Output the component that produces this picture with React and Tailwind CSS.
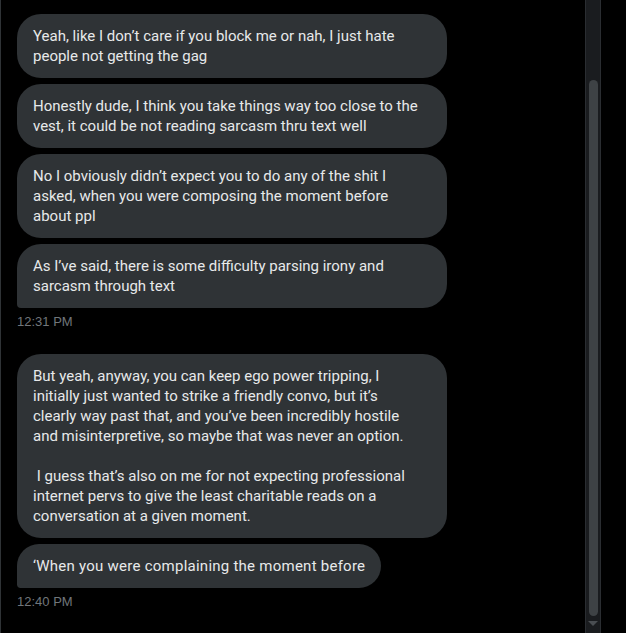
import React from 'react';

// lines are broken where the reference wraps them
const groups = [
  {
    time: '12:31 PM',
    messages: [
      ['Yeah, like I don’t care if you block me or nah, I just hate', 'people not getting the gag'],
      ['Honestly dude, I think you take things way too close to the', 'vest, it could be not reading sarcasm thru text well'],
      ['No I obviously didn’t expect you to do any of the shit I', 'asked, when you were composing the moment before', 'about ppl'],
      ['As I’ve said, there is some difficulty parsing irony and', 'sarcasm through text'],
    ],
  },
  {
    time: '12:40 PM',
    messages: [
      [
        'But yeah, anyway, you can keep ego power tripping, I',
        'initially just wanted to strike a friendly convo, but it’s',
        'clearly way past that, and you’ve been incredibly hostile',
        'and misinterpretive, so maybe that was never an option.',
        '',
        ' I guess that’s also on me for not expecting professional',
        'internet pervs to give the least charitable reads on a',
        'conversation at a given moment.',
      ],
      ['‘When you were complaining the moment before'],
    ],
  },
];

function Bubble({ lines, last }) {
  const multi = lines.length > 1;
  return (
    <div
      className={`${multi ? 'w-[430px]' : 'w-fit tracking-[0.25px]'} bg-[#2f3336] text-[#e7e9ea] px-4 py-[12px] text-[15px] leading-[20px] whitespace-pre rounded-[24px] ${last ? 'rounded-bl-[4px]' : ''}`}
    >
      {lines.join('\n')}
    </div>
  );
}

export default function App() {
  return (
    <div className="h-[633px] w-[626px] bg-black flex overflow-hidden" style={{ fontFamily: '"Segoe UI", Roboto, sans-serif' }}>
      <div className="flex-1 border-l border-[#2f3336] pl-4 pt-[14px] flex flex-col">
        {groups.map((g, gi) => (
          <div key={gi} className={`flex flex-col ${gi > 0 ? 'mt-[24px]' : ''}`}>
            <div className="flex flex-col gap-[6px]">
              {g.messages.map((m, i) => (
                <Bubble key={i} lines={m} last={i === g.messages.length - 1} />
              ))}
            </div>
            <div className="mt-[6px] text-[13px] leading-[16px] text-[#71767b]" style={{ fontFamily: '"Liberation Sans", Arial, sans-serif' }}>
              {g.time}
            </div>
          </div>
        ))}
      </div>
      {/* scrollbar */}
      <div className="w-[16px] h-full bg-[#1a1c1f] border-l border-r border-[#2a2d31] flex flex-col items-center mr-[25px]">
        <div className="mt-[80px] w-[9px] h-[536px] rounded-full bg-[#3e4245]" />
        <div className="mt-[5px] w-0 h-0 border-l-[5px] border-r-[5px] border-t-[5px] border-l-transparent border-r-transparent border-t-[#4a4e52]" />
      </div>
    </div>
  );
}
